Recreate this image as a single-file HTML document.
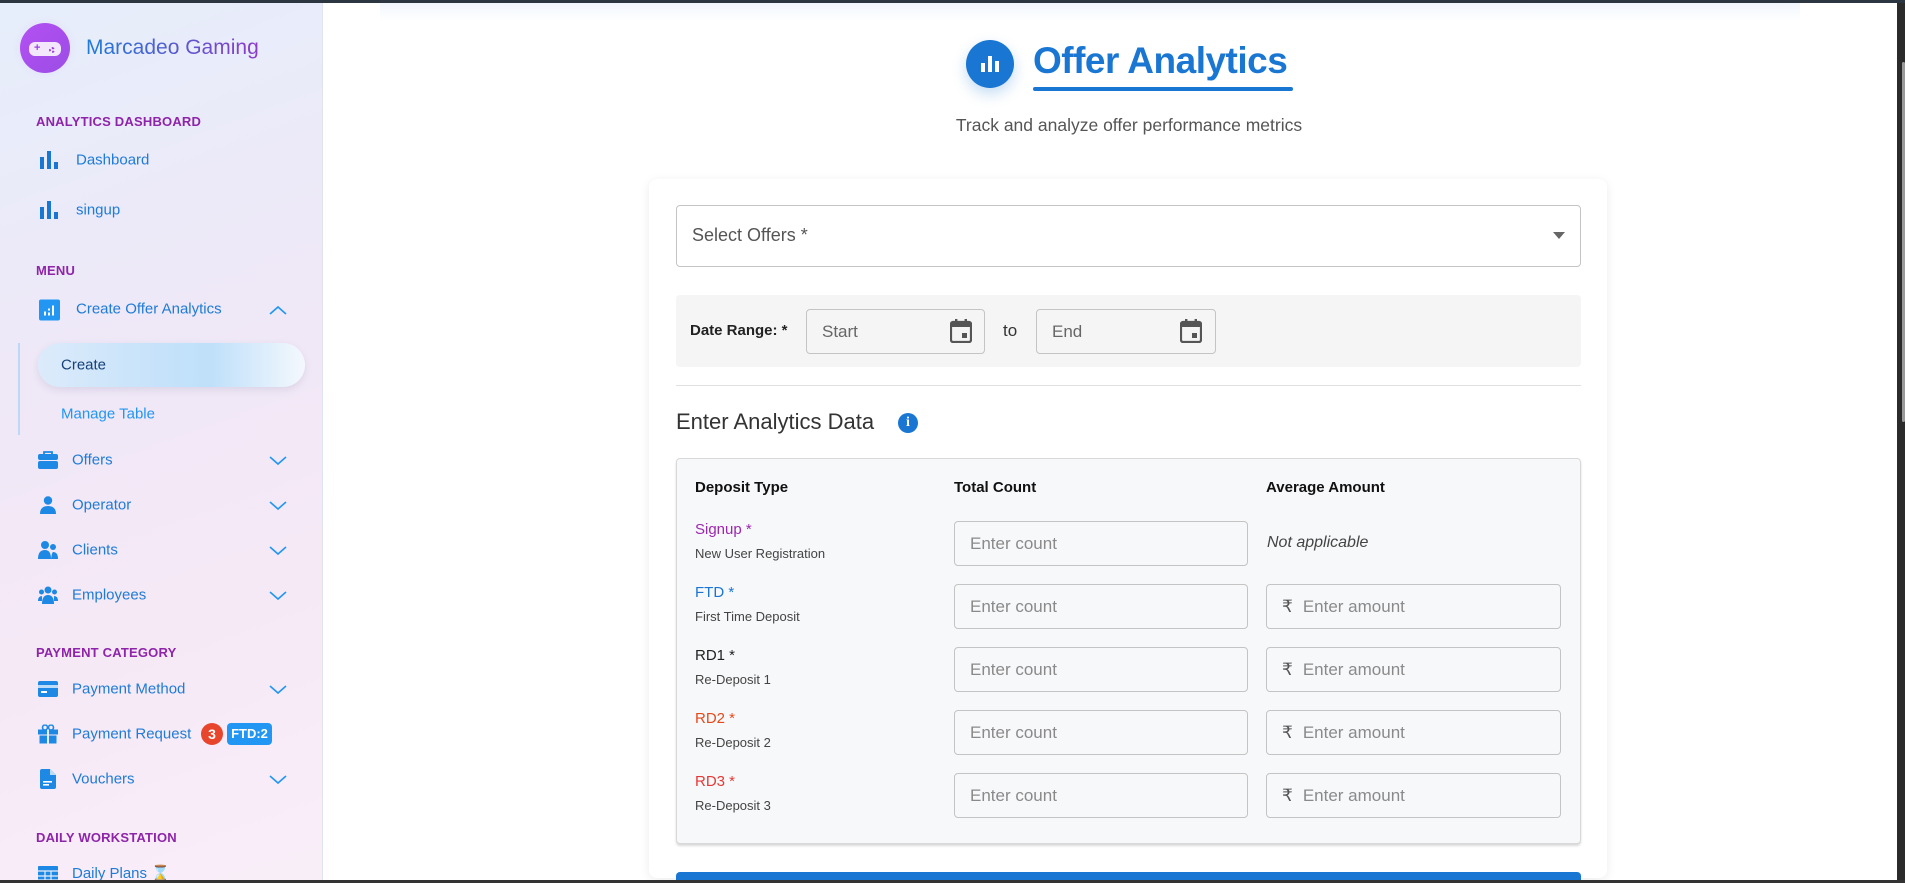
<!DOCTYPE html>
<html><head><meta charset="utf-8">
<style>
*{box-sizing:border-box;margin:0;padding:0}
html,body{width:1905px;height:883px;overflow:hidden;font-family:"Liberation Sans",sans-serif;background:#fff}
#wrap{position:relative;width:1905px;height:883px;overflow:hidden}
.abs{position:absolute}
#topbar{left:0;top:0;width:1905px;height:3px;background:#2c3640}
#botbar{left:0;top:880px;width:1905px;height:3px;background:#333}
#sb{left:0;top:3px;width:323px;height:877px;background:linear-gradient(160deg,#e6eefb 0%,#efe8f7 40%,#f6e9f6 70%,#f8eef8 100%);border-right:1px solid #e0e2f0}
.sec{position:absolute;left:36px;font-size:13px;font-weight:bold;color:#8e24aa;letter-spacing:.2px}
.it{position:absolute;left:72px;font-size:15px;color:#1e7bd8;transform:translateY(-50%)}
.ic{position:absolute;left:38px;transform:translateY(-50%)}
.chev{position:absolute;left:268px;transform:translateY(-50%)}
#scroll{left:1897px;top:3px;width:8px;height:877px;background:#2b2b2b}
#thumb{left:1902px;top:62px;width:3px;height:360px;background:#9a9a9a;border-radius:2px}
.card{left:649px;top:179px;width:958px;height:699px;background:#fff;border-radius:8px;box-shadow:0 2px 10px rgba(0,0,0,.08)}
.inp{position:absolute;border:1px solid #c4c4c4;border-radius:4px;background:#f7f8fa;font-size:17px;color:#8a8a8a;padding-left:15px;display:flex;align-items:center}
.lbl{position:absolute;left:695px;font-size:15px}
.sub{position:absolute;left:695px;font-size:13px;color:#444}
</style></head><body><div id="wrap">
<div id="topbar" class="abs"></div>
<div id="sb" class="abs"></div>
<div class="abs" style="left:12px;top:15px;width:66px;height:66px;border-radius:50%;background:radial-gradient(circle,rgba(190,170,240,.35),rgba(255,255,255,0) 70%)"></div>
<div class="abs" style="left:20px;top:23px;width:50px;height:50px;border-radius:50%;background:linear-gradient(135deg,#b450f2,#9b4de6)"></div>
<div class="abs" style="left:29px;top:42px;width:32px;height:14px;border-radius:6px;background:#f3e8fb"></div>
<div class="abs" style="left:34px;top:42px;font-size:11px;color:#9b3fe0;font-weight:bold">+</div>
<div class="abs" style="left:49px;top:47px;width:6px;height:6px;border-radius:50%;border:2px dotted #9b3fe0"></div>
<div class="abs" style="left:86px;top:36px;font-size:21px;background:linear-gradient(90deg,#1e7bd8,#8e3bc8);-webkit-background-clip:text;color:transparent">Marcadeo Gaming</div>

<div class="sec" style="top:114px">ANALYTICS DASHBOARD</div>
<svg class="ic" style="top:160px;left:40px" width="19" height="18" viewBox="0 0 19 18"><rect x="0" y="6" width="4" height="12" fill="#1976d2"/><rect x="7" y="0" width="4" height="18" fill="#1976d2"/><rect x="14" y="11" width="4" height="7" fill="#1976d2"/></svg>
<div class="it" style="top:160px;left:76px">Dashboard</div>
<svg class="ic" style="top:210px;left:40px" width="19" height="18" viewBox="0 0 19 18"><rect x="0" y="6" width="4" height="12" fill="#1976d2"/><rect x="7" y="0" width="4" height="18" fill="#1976d2"/><rect x="14" y="11" width="4" height="7" fill="#1976d2"/></svg>
<div class="it" style="top:210px;left:76px">singup</div>

<div class="sec" style="top:263px">MENU</div>
<svg class="ic" style="top:310px;left:39px" width="21" height="21" viewBox="0 0 21 21"><rect width="21" height="21" rx="2" fill="#2196f3"/><rect x="5" y="12" width="2" height="4" fill="#fff"/><rect x="9" y="9" width="2" height="2" fill="#fff"/><rect x="9" y="13" width="2" height="3" fill="#fff"/><rect x="13" y="6" width="2" height="10" fill="#fff"/></svg>
<div class="it" style="top:309px;left:76px">Create Offer Analytics</div>
<svg class="chev" style="top:310px" width="20" height="12" viewBox="0 0 20 12"><path d="M2 10 L10 3 L18 10" fill="none" stroke="#2196f3" stroke-width="1.6"/></svg>
<div class="abs" style="left:18px;top:343px;width:2px;height:92px;background:#bcd8f6"></div>
<div class="abs" style="left:38px;top:343px;width:267px;height:44px;border-radius:22px;background:linear-gradient(90deg,#dcebfb 0%,#c6e2fa 45%,#bfe0fa 65%,#f4f8fd 100%);box-shadow:0 3px 8px rgba(120,120,160,.18)"></div>
<div class="it" style="top:365px;left:61px;color:#16407a;font-size:15px">Create</div>
<div class="it" style="top:414px;left:61px;color:#2196f3;font-size:15px">Manage Table</div>

<svg class="ic" style="top:460px" width="20" height="18" viewBox="0 0 20 18"><path d="M6 3 V1 h8 v2" fill="none" stroke="#1e88e5" stroke-width="1.8"/><rect x="0" y="3" width="20" height="6" rx="2" fill="#1e88e5"/><rect x="0" y="10" width="20" height="8" rx="2" fill="#1e88e5"/></svg>
<div class="it" style="top:460px">Offers</div>
<svg class="chev" style="top:461px" width="20" height="12" viewBox="0 0 20 12"><path d="M2 2 L10 9 L18 2" fill="none" stroke="#2196f3" stroke-width="1.6"/></svg>
<svg class="ic" style="top:505px;left:40px" width="16" height="18" viewBox="0 0 16 18"><circle cx="8" cy="4.5" r="4.2" fill="#1e88e5"/><path d="M0 18 Q0 10 8 10 Q16 10 16 18Z" fill="#1e88e5"/></svg>
<div class="it" style="top:505px">Operator</div>
<svg class="chev" style="top:506px" width="20" height="12" viewBox="0 0 20 12"><path d="M2 2 L10 9 L18 2" fill="none" stroke="#2196f3" stroke-width="1.6"/></svg>
<svg class="ic" style="top:550px" width="20" height="18" viewBox="0 0 20 18"><circle cx="7" cy="4" r="4" fill="#1e88e5"/><circle cx="15" cy="6" r="3" fill="#1e88e5"/><path d="M0 18 Q0 9 7 9 Q13 9 13 18Z" fill="#1e88e5"/><path d="M13 18 Q14 11 15 11 Q20 11 20 18Z" fill="#1e88e5"/></svg>
<div class="it" style="top:550px">Clients</div>
<svg class="chev" style="top:551px" width="20" height="12" viewBox="0 0 20 12"><path d="M2 2 L10 9 L18 2" fill="none" stroke="#2196f3" stroke-width="1.6"/></svg>
<svg class="ic" style="top:595px" width="20" height="18" viewBox="0 0 20 18"><circle cx="10" cy="4" r="3.5" fill="#1e88e5"/><circle cx="3.5" cy="6" r="2.5" fill="#1e88e5"/><circle cx="16.5" cy="6" r="2.5" fill="#1e88e5"/><path d="M4 18 Q4 9 10 9 Q16 9 16 18Z" fill="#1e88e5"/><path d="M0 15 Q0 10 4 10 L4 15Z M16 10 Q20 10 20 15 L16 15Z" fill="#1e88e5"/></svg>
<div class="it" style="top:595px">Employees</div>
<svg class="chev" style="top:596px" width="20" height="12" viewBox="0 0 20 12"><path d="M2 2 L10 9 L18 2" fill="none" stroke="#2196f3" stroke-width="1.6"/></svg>

<div class="sec" style="top:645px">PAYMENT CATEGORY</div>
<svg class="ic" style="top:689px" width="20" height="16" viewBox="0 0 20 16"><rect width="20" height="16" rx="2" fill="#1e88e5"/><rect x="0" y="4" width="20" height="3" fill="#bcdcf8"/><rect x="3" y="10" width="6" height="2" fill="#fff"/></svg>
<div class="it" style="top:689px">Payment Method</div>
<svg class="chev" style="top:690px" width="20" height="12" viewBox="0 0 20 12"><path d="M2 2 L10 9 L18 2" fill="none" stroke="#2196f3" stroke-width="1.6"/></svg>
<svg class="ic" style="top:734px" width="20" height="19" viewBox="0 0 20 19"><circle cx="7" cy="3" r="2.5" fill="none" stroke="#1e88e5" stroke-width="1.6"/><circle cx="13" cy="3" r="2.5" fill="none" stroke="#1e88e5" stroke-width="1.6"/><rect x="0" y="5" width="20" height="5" fill="#1e88e5"/><rect x="1.5" y="11" width="17" height="8" fill="#1e88e5"/><rect x="9" y="5" width="2" height="14" fill="#e8eefa"/></svg>
<div class="it" style="top:734px">Payment Request</div>
<div class="abs" style="left:201px;top:723px;width:22px;height:22px;border-radius:50%;background:#e8452d;color:#fff;font-size:14px;font-weight:bold;text-align:center;line-height:22px">3</div>
<div class="abs" style="left:227px;top:723px;width:45px;height:22px;border-radius:4px;background:#2196f3;color:#fff;font-size:13px;font-weight:bold;text-align:center;line-height:22px">FTD:2</div>
<svg class="ic" style="top:779px;left:40px" width="16" height="20" viewBox="0 0 16 20"><path d="M0 2 Q0 0 2 0 H10 L16 6 V18 Q16 20 14 20 H2 Q0 20 0 18Z" fill="#1e88e5"/><path d="M10 0 V6 H16" fill="#bcdcf8"/><rect x="3" y="12" width="9" height="1.6" fill="#fff"/><rect x="3" y="15" width="6" height="1.6" fill="#fff"/></svg>
<div class="it" style="top:779px">Vouchers</div>
<svg class="chev" style="top:780px" width="20" height="12" viewBox="0 0 20 12"><path d="M2 2 L10 9 L18 2" fill="none" stroke="#2196f3" stroke-width="1.6"/></svg>

<div class="sec" style="top:830px">DAILY WORKSTATION</div>
<svg class="abs" style="top:866px;left:38px" width="20" height="18" viewBox="0 0 20 18"><rect width="20" height="18" rx="1" fill="#1e88e5"/><path d="M0 5 H20 M0 10 H20 M0 14 H20 M7 5 V18 M13 5 V18" stroke="#e8eefa" stroke-width="1.2"/></svg>
<div class="abs" style="top:864px;left:72px;font-size:15px;color:#1e7bd8">Daily Plans <span style="color:#d9a441">⌛</span></div>

<div class="abs" style="left:380px;top:3px;width:1420px;height:18px;background:linear-gradient(180deg,#f1f6fd,rgba(255,255,255,0))"></div>
<div class="abs" style="left:966px;top:40px;width:48px;height:48px;border-radius:50%;background:#1976d2;box-shadow:0 6px 14px rgba(25,118,210,.25)"></div>
<svg class="abs" style="left:980px;top:53px" width="20" height="20" viewBox="0 0 20 20"><rect x="1" y="10" width="4" height="9" fill="#fff"/><rect x="8" y="3" width="4" height="16" fill="#fff"/><rect x="15" y="8" width="4" height="11" fill="#fff"/></svg>
<div class="abs" style="left:1033px;top:40px;font-size:37px;font-weight:bold;color:#1976d2;letter-spacing:-.5px">Offer Analytics</div>
<div class="abs" style="left:1033px;top:87px;width:260px;height:4px;border-radius:2px;background:#1976d2"></div>
<div class="abs" style="left:800px;top:115px;width:658px;text-align:center;font-size:17.5px;color:#555">Track and analyze offer performance metrics</div>

<div class="abs card"></div>
<div class="abs" style="left:676px;top:205px;width:905px;height:62px;border:1px solid #c4c4c4;border-radius:4px"></div>
<div class="abs" style="left:692px;top:225px;font-size:18px;color:#555">Select Offers *</div>
<svg class="abs" style="left:1553px;top:232px" width="12" height="7"><path d="M0 0 H12 L6 7Z" fill="#666"/></svg>

<div class="abs" style="left:676px;top:295px;width:905px;height:72px;background:#f5f5f5;border-radius:4px"></div>
<div class="abs" style="left:690px;top:322px;font-size:15px;font-weight:bold;color:#222">Date Range: *</div>
<div class="inp" style="left:806px;top:309px;width:179px;height:45px;background:#f5f5f5;color:#666">Start</div>
<svg class="abs" style="left:950px;top:319px" width="22" height="24" viewBox="0 0 22 24"><rect x="1" y="3" width="20" height="20" rx="2" fill="none" stroke="#555" stroke-width="2.2"/><rect x="1" y="3" width="20" height="5" fill="#555"/><rect x="5" y="0" width="2.4" height="5" fill="#555"/><rect x="14.6" y="0" width="2.4" height="5" fill="#555"/><rect x="12" y="14" width="5" height="5" fill="#555"/></svg>
<div class="abs" style="left:1003px;top:321px;font-size:17px;color:#333">to</div>
<div class="inp" style="left:1036px;top:309px;width:180px;height:45px;background:#f5f5f5;color:#666">End</div>
<svg class="abs" style="left:1180px;top:319px" width="22" height="24" viewBox="0 0 22 24"><rect x="1" y="3" width="20" height="20" rx="2" fill="none" stroke="#555" stroke-width="2.2"/><rect x="1" y="3" width="20" height="5" fill="#555"/><rect x="5" y="0" width="2.4" height="5" fill="#555"/><rect x="14.6" y="0" width="2.4" height="5" fill="#555"/><rect x="12" y="14" width="5" height="5" fill="#555"/></svg>
<div class="abs" style="left:676px;top:385px;width:905px;height:1px;background:#e0e0e0"></div>
<div class="abs" style="left:676px;top:409px;font-size:22px;color:#333">Enter Analytics Data</div>
<div class="abs" style="left:898px;top:413px;width:20px;height:20px;border-radius:50%;background:#1976d2;color:#fff;font-size:14px;font-weight:bold;text-align:center;line-height:20px;font-family:'Liberation Serif',serif">i</div>

<div class="abs" style="left:676px;top:458px;width:905px;height:386px;background:#f7f8fa;border:1px solid #d8d8d8;border-radius:4px;box-shadow:0 2px 2px rgba(0,0,0,.15)"></div>
<div class="abs" style="left:695px;top:479px;font-size:15px;font-weight:bold;color:#111">Deposit Type</div>
<div class="abs" style="left:954px;top:479px;font-size:15px;font-weight:bold;color:#111">Total Count</div>
<div class="abs" style="left:1266px;top:479px;font-size:15px;font-weight:bold;color:#111">Average Amount</div>

<div class="lbl" style="top:521px;color:#9c27b0">Signup *</div><div class="sub" style="top:546px">New User Registration</div>
<div class="inp" style="left:954px;top:521px;width:294px;height:45px">Enter count</div>
<div class="abs" style="left:1267px;top:534px;font-size:16px;font-style:italic;color:#444">Not applicable</div>

<div class="lbl" style="top:584px;color:#1976d2">FTD *</div><div class="sub" style="top:609px">First Time Deposit</div>
<div class="inp" style="left:954px;top:584px;width:294px;height:45px">Enter count</div>
<div class="inp" style="left:1266px;top:584px;width:295px;height:45px"><span style="color:#555;margin-right:10px">₹</span>Enter amount</div>

<div class="lbl" style="top:647px;color:#222">RD1 *</div><div class="sub" style="top:672px">Re-Deposit 1</div>
<div class="inp" style="left:954px;top:647px;width:294px;height:45px">Enter count</div>
<div class="inp" style="left:1266px;top:647px;width:295px;height:45px"><span style="color:#555;margin-right:10px">₹</span>Enter amount</div>

<div class="lbl" style="top:710px;color:#e64a19">RD2 *</div><div class="sub" style="top:735px">Re-Deposit 2</div>
<div class="inp" style="left:954px;top:710px;width:294px;height:45px">Enter count</div>
<div class="inp" style="left:1266px;top:710px;width:295px;height:45px"><span style="color:#555;margin-right:10px">₹</span>Enter amount</div>

<div class="lbl" style="top:773px;color:#e53935">RD3 *</div><div class="sub" style="top:798px">Re-Deposit 3</div>
<div class="inp" style="left:954px;top:773px;width:294px;height:45px">Enter count</div>
<div class="inp" style="left:1266px;top:773px;width:295px;height:45px"><span style="color:#555;margin-right:10px">₹</span>Enter amount</div>

<div class="abs" style="left:676px;top:872px;width:905px;height:11px;border-radius:4px 4px 0 0;background:#1976d2"></div>

<div id="scroll" class="abs"></div>
<div id="thumb" class="abs"></div>
<div id="botbar" class="abs"></div>
</div></body></html>
